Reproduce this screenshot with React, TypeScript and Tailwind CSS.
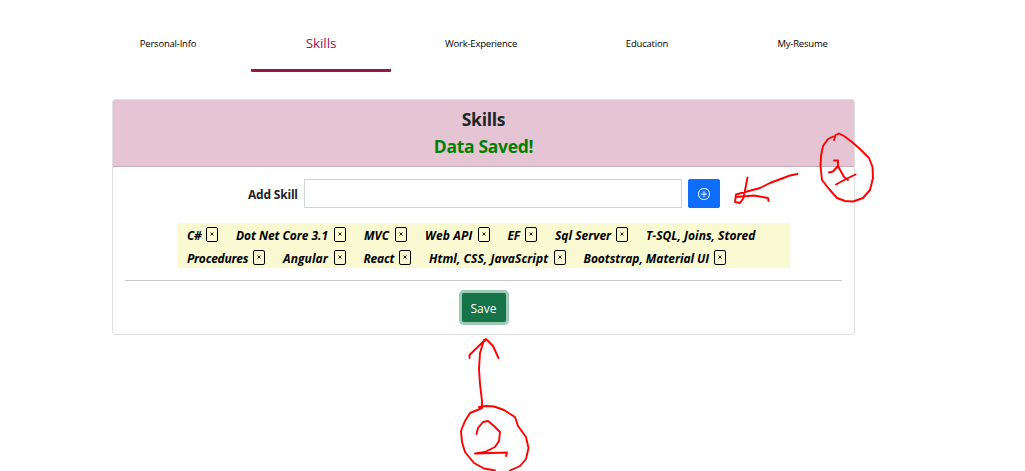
const tabs = [
  { label: 'Personal-Info', box: 'w-[168px] ml-[84px]', text: 'text-[9.5px] tracking-[-0.2px]' },
  { label: 'Skills', box: 'w-[140px] ml-[-1px]', text: 'text-[13.5px] tracking-[-0.1px] text-[#98144d]', active: true },
  { label: 'Work-Experience', box: 'w-[180px]', text: 'text-[9.5px] tracking-[-0.2px]' },
  { label: 'Education', box: 'w-[152px]', text: 'text-[9.5px] tracking-[-0.2px]' },
  { label: 'My-Resume', box: 'w-[159px]', text: 'text-[9.5px] tracking-[-0.2px]' },
];

const rows = [
  [
    { label: 'C#', w: 'w-[19px] tracking-[-0.4px]' },
    { label: 'Dot Net Core 3.1', w: 'w-[98px] tracking-[-0.05px]' },
    { label: 'MVC', w: 'w-[31px] tracking-[0px]' },
    { label: 'Web API', w: 'w-[52.5px] tracking-[0.15px]' },
    { label: 'EF', w: 'w-[17.5px] tracking-[-0.2px]' },
    { label: 'Sql Server', w: 'w-[61px] tracking-[0px]' },
    { label: 'T-SQL, Joins, Stored', w: 'w-[115px] tracking-[0px]', open: true },
  ],
  [
    { label: 'Procedures', w: 'w-[66px] tracking-[-0.25px]' },
    { label: 'Angular', w: 'w-[50.5px] tracking-[0.1px]' },
    { label: 'React', w: 'w-[35.5px] tracking-[-0.2px]' },
    { label: 'Html, CSS, JavaScript', w: 'w-[124.5px] tracking-[0.05px]' },
    { label: 'Bootstrap, Material UI', w: 'w-[130px] tracking-[-0.05px]' },
  ],
];

function Annotations() {
  return (
    <svg
      className="pointer-events-none absolute left-0 top-0"
      width="1025"
      height="471"
      viewBox="0 0 1025 471"
      fill="none"
      stroke="#ff0000"
      strokeWidth="1.9"
      strokeLinecap="round"
      strokeLinejoin="round"
    >
      <path d="M833 136.500 L828 139 L823 146 L821 156 L820.500 166 L822 180 L829 189 L837 198 L845 201 L853 201.500 L863 198 L870 190 L873 178 L872.500 167 L869 158 L860 149 L852 142 L844 136 L839 133.500 L835.500 135 L834 140" />
      <path d="M834 160.500 H838 V166 L833 171.500 L829 172.500 M838 166 L844 177 L848 180 M836 184.500 L846 179 L855.500 174.500" />
      <path d="M797.500 174 L790 175.500 L778 180 L770 183 L760 188 L736 194.500 L735 202 L740 203 L743.500 198 L747.500 177.500 M736 197 L754 195.500 L768 198 L768.500 201" />
      <path d="M482 408 V401 L480 384 L479 369 L480 353 L484 340 M469.500 358 V355 L486 339 L493 346 L498.500 358 M483 342 L486 340" />
      <path d="M481 408.500 L470 413 L465 421 L461 431 L462 442 L465 452 L474 463 L484 468.500 L495 470.500 M510 470.500 L520 466 L526 459 L528.500 448 L526 437 L518 426 L515 417 L504 410 L494 406.500 L486 406 L479 407" />
      <path d="M476.500 434 L478 428 L483 422 L488 421 L494 426 L500 432 L499 441 L495 447 L485 452 L475 453.500 L507 452.500 L506 456" />
    </svg>
  );
}

export default function App() {
  return (
    <div className="relative h-[471px] w-[1025px] overflow-hidden bg-white font-['Open_Sans','Noto_Sans',sans-serif] text-[#212529]">
      <nav className="flex h-[72px]">
        {tabs.map((t) => (
          <div
            key={t.label}
            className={`flex shrink-0 flex-col items-center whitespace-nowrap ${t.box} ${t.active ? 'border-b-[3px] border-[#98144d] rounded-b-[1px]' : ''}`}
          >
            <span className={`mt-[34px] leading-[19px] ${t.active ? '' : 'text-black'} ${t.text}`}>{t.label}</span>
          </div>
        ))}
      </nav>

      <section className="ml-[112px] mt-[27px] h-[236px] w-[743px] rounded-[3px] border border-[#dfdfdf]">
        <header className="h-[67px] rounded-t-[2px] border-b border-[#c8abb8] bg-[#e5c5d3] pt-[6px] text-center text-[17.5px] font-bold leading-[27px] tracking-[-0.3px]">
          <h1>Skills</h1>
          <p className="text-[#008000]">Data Saved!</p>
        </header>

        <div className="mt-[12px] flex h-[29px] items-center">
          <label htmlFor="skill" className="ml-[135px] w-[56px] whitespace-nowrap pt-[2px] text-[12px] font-bold tracking-[-0.2px]">
            Add Skill
          </label>
          <input id="skill" className="h-[29px] w-[378px] border border-[#ced4da] bg-white outline-none" />
          <button className="ml-[6px] flex h-[29px] w-[32px] items-center justify-center rounded-[2px] bg-[#0d6efd]" aria-label="Add">
            <svg width="12" height="12" viewBox="0 0 16 16" fill="white" stroke="white" strokeWidth="0.3">
              <path d="M8 15A7 7 0 1 1 8 1a7 7 0 0 1 0 14m0 1A8 8 0 1 0 8 0a8 8 0 0 0 0 16" />
              <path d="M8 4a.5.5 0 0 1 .5.5v3h3a.5.5 0 0 1 0 1h-3v3a.5.5 0 0 1-1 0v-3h-3a.5.5 0 0 1 0-1h3v-3A.5.5 0 0 1 8 4" />
            </svg>
          </button>
        </div>

        <div className="ml-[65px] mt-[15px] h-[45px] w-[612px] bg-[#fafad2] pl-[9px] text-[12px] font-bold italic text-black">
          {rows.map((row, i) => (
            <div key={i} className="flex h-[23px] items-center">
              {row.map((s) => (
                <div key={s.label} className="mr-[18px] flex shrink-0 items-center">
                  <span className={`whitespace-nowrap pt-[2px] leading-[21px] ${s.w}`}>{s.label}</span>
                  {!s.open && (
                    <button className="flex h-[15px] w-[12px] items-center justify-center rounded-[2px] border border-black pb-px" aria-label="Remove">
                      <svg width="4" height="4" viewBox="0 0 4 4" stroke="#222">
                        <path d="M.5.5l3 3M3.500.5l-3 3" />
                      </svg>
                    </button>
                  )}
                </div>
              ))}
            </div>
          ))}
        </div>

        <hr className="mx-[12px] mt-[12px] border-[#c8c9ca]" />
        <div className="mt-[12px] flex justify-center">
          <button className="h-[29px] w-[44px] rounded-[2px] bg-[#157347] pt-[2px] text-[12px] text-white ring-[3px] ring-[#9dcab4]">Save</button>
        </div>
      </section>
      <Annotations />
    </div>
  );
}
